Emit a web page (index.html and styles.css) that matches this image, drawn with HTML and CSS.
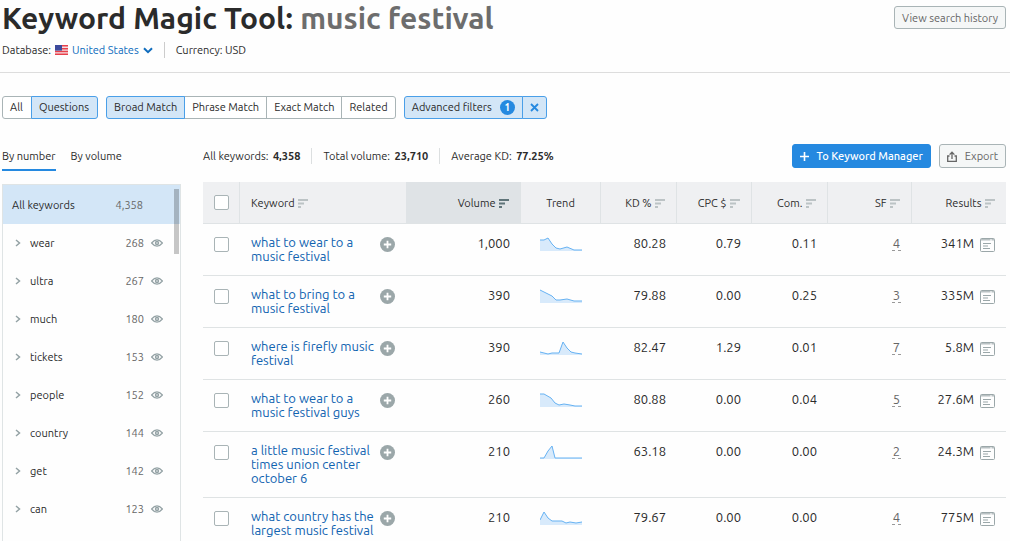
FILE: index.html
```
<!DOCTYPE html>
<html lang="en">
<head>
    <meta charset="UTF-8">
    <title>Keyword Magic Tool</title>
    <link rel="stylesheet" href="styles.css">
</head>
<body>
    <!-- Shared icons -->
    <svg class="icon-defs" aria-hidden="true">
        <symbol id="sort" viewBox="0 0 10 9">
            <path d="M0 0h10v2H0zM0 3.5h6v2H0zM0 7h3v2H0z" fill="currentColor"/>
        </symbol>
        <symbol id="plus" viewBox="0 0 15 15">
            <circle cx="7.5" cy="7.5" r="7.5" fill="currentColor"/>
            <path d="M7.5 3.8v7.4M3.8 7.5h7.4" stroke="#fff" stroke-width="1.8"/>
        </symbol>
        <symbol id="serp" viewBox="0 0 15 14">
            <rect x="0.5" y="0.5" width="14" height="13" rx="1" fill="none" stroke="currentColor"/>
            <path d="M1 1h9.5v1.5H1zM11.5 1H14v1.5h-2.5z" fill="currentColor" opacity="0.7"/>
            <path d="M3 5.5h8M3 8h5M3 10.5h7" stroke="currentColor"/>
        </symbol>
        <symbol id="chevron" viewBox="0 0 6 8">
            <path d="M1 1l3.5 3L1 7" fill="none" stroke="currentColor" stroke-width="1.5"/>
        </symbol>
        <symbol id="eye" viewBox="0 0 12 8">
            <path d="M0.6 4Q6 -2.4 11.4 4Q6 10.4 0.6 4z" fill="none" stroke="currentColor" stroke-width="1.2"/>
            <circle cx="6" cy="4" r="2.2" fill="currentColor"/>
            <circle cx="6" cy="4" r="0.7" fill="#fff"/>
        </symbol>
    </svg>

    <header class="page-header">
        <div>
            <h1 class="page-title">Keyword Magic Tool: <span>music festival</span></h1>
            <div class="page-info">
                <span>Database:</span>
                <svg class="flag" viewBox="0 0 13 10">
                    <path d="M0 0h13v10H0z" fill="#f4dfe2"/>
                    <path d="M0 0h13v1.6H0zM0 2.9h13v1.5H0zM0 5.7h13v1.5H0zM0 8.5h13V10H0z" fill="#e8404b"/>
                    <path d="M0 0h7v5.6H0z" fill="#3d4a9c"/>
                </svg>
                <button type="button" class="country-button">United States
                    <svg width="10" height="7" viewBox="0 0 10 7"><path d="M1 1.2l4 4 4-4" fill="none" stroke="currentColor" stroke-width="2"/></svg>
                </button>
                <span class="currency">Currency: USD</span>
            </div>
        </div>
        <button type="button" class="button">View search history</button>
    </header>

    <div class="filters">
        <div class="button-group scope">
            <button type="button">All</button>
            <button type="button" class="active">Questions</button>
        </div>
        <div class="button-group">
            <button type="button" class="active">Broad Match</button>
            <button type="button">Phrase Match</button>
            <button type="button">Exact Match</button>
            <button type="button">Related</button>
        </div>
        <div class="button-group">
            <button type="button" class="active">Advanced filters <span class="badge">1</span></button>
            <button type="button" class="active clear" aria-label="Clear filters">
                <svg width="9" height="9" viewBox="0 0 9 9"><path d="M1 1l7 7M8 1L1 8" stroke="currentColor" stroke-width="1.8"/></svg>
            </button>
        </div>
    </div>

    <div class="content">
        <aside class="sidebar">
            <div class="tabs">
                <button type="button" class="tab active">By number</button>
                <button type="button" class="tab">By volume</button>
            </div>
            <div class="groups">
                <div class="scroll-thumb"></div>
                <div class="group-all"><span>All keywords</span><span class="count">4,358</span></div>
                <ul>
                    <li><svg class="chevron"><use href="#chevron"/></svg><span class="name">wear</span><span class="count">268</span><svg class="eye"><use href="#eye"/></svg></li>
                    <li><svg class="chevron"><use href="#chevron"/></svg><span class="name">ultra</span><span class="count">267</span><svg class="eye"><use href="#eye"/></svg></li>
                    <li><svg class="chevron"><use href="#chevron"/></svg><span class="name">much</span><span class="count">180</span><svg class="eye"><use href="#eye"/></svg></li>
                    <li><svg class="chevron"><use href="#chevron"/></svg><span class="name">tickets</span><span class="count">153</span><svg class="eye"><use href="#eye"/></svg></li>
                    <li><svg class="chevron"><use href="#chevron"/></svg><span class="name">people</span><span class="count">152</span><svg class="eye"><use href="#eye"/></svg></li>
                    <li><svg class="chevron"><use href="#chevron"/></svg><span class="name">country</span><span class="count">144</span><svg class="eye"><use href="#eye"/></svg></li>
                    <li><svg class="chevron"><use href="#chevron"/></svg><span class="name">get</span><span class="count">142</span><svg class="eye"><use href="#eye"/></svg></li>
                    <li><svg class="chevron"><use href="#chevron"/></svg><span class="name">can</span><span class="count">123</span><svg class="eye"><use href="#eye"/></svg></li>
                </ul>
            </div>
        </aside>

        <main class="results">
            <div class="toolbar">
                <div class="summary">
                    <span>All keywords: <b>4,358</b></span>
                    <span>Total volume: <b>23,710</b></span>
                    <span>Average KD: <b>77.25%</b></span>
                </div>
                <button type="button" class="button primary">
                    <svg width="9" height="9" viewBox="0 0 9 9"><path d="M4.5 0v9M0 4.5h9" stroke="currentColor" stroke-width="1.6"/></svg>
                    To Keyword Manager
                </button>
                <button type="button" class="button">
                    <svg width="10" height="11" viewBox="0 0 10 11"><path d="M2.5 5H0.7v5.3h8.6V5H7.5M5 8V1.5M2.6 3.6L5 1.2l2.4 2.4" fill="none" stroke="currentColor" stroke-width="1.3"/></svg>
                    Export
                </button>
            </div>

            <table class="keywords">
                <colgroup>
                    <col class="col-check"><col><col class="col-volume"><col class="col-trend"><col class="col-num"><col class="col-cpc"><col class="col-num"><col class="col-sf"><col class="col-results">
                </colgroup>
                <thead>
                    <tr>
                        <th class="check"><input type="checkbox" aria-label="Select all"></th>
                        <th class="keyword">Keyword <svg class="sort"><use href="#sort"/></svg></th>
                        <th class="sorted">Volume <svg class="sort"><use href="#sort"/></svg></th>
                        <th class="trend">Trend</th>
                        <th>KD % <svg class="sort"><use href="#sort"/></svg></th>
                        <th>CPC $ <svg class="sort"><use href="#sort"/></svg></th>
                        <th>Com. <svg class="sort"><use href="#sort"/></svg></th>
                        <th>SF <svg class="sort"><use href="#sort"/></svg></th>
                        <th>Results <svg class="sort"><use href="#sort"/></svg></th>
                    </tr>
                </thead>
                <tbody>
                    <tr>
                        <td class="check"><input type="checkbox" aria-label="Select keyword"></td>
                        <td><div class="phrase"><a href="#">what to wear to a music festival</a><svg class="add"><use href="#plus"/></svg></div></td>
                        <td>1,000</td>
                        <td class="trend"><svg viewBox="0 0 42 14"><path class="area" d="M0 3L4 3L8 1L12 7L16 11L20 12L27 10L34 13L42 13V14H0z"/><path class="line" d="M0 3L4 3L8 1L12 7L16 11L20 12L27 10L34 13L42 13"/></svg></td>
                        <td>80.28</td>
                        <td>0.79</td>
                        <td>0.11</td>
                        <td><span class="sf">4</span></td>
                        <td>341M <svg class="serp"><use href="#serp"/></svg></td>
                    </tr>
                    <tr>
                        <td class="check"><input type="checkbox" aria-label="Select keyword"></td>
                        <td><div class="phrase"><a href="#">what to bring to a music festival</a><svg class="add"><use href="#plus"/></svg></div></td>
                        <td>390</td>
                        <td class="trend"><svg viewBox="0 0 42 14"><path class="area" d="M0 1L6 4L12 7L16 11L20 11L27 10L34 12L42 12V14H0z"/><path class="line" d="M0 1L6 4L12 7L16 11L20 11L27 10L34 12L42 12"/></svg></td>
                        <td>79.88</td>
                        <td>0.00</td>
                        <td>0.25</td>
                        <td><span class="sf">3</span></td>
                        <td>335M <svg class="serp"><use href="#serp"/></svg></td>
                    </tr>
                    <tr>
                        <td class="check"><input type="checkbox" aria-label="Select keyword"></td>
                        <td><div class="phrase"><a href="#">where is firefly music festival</a><svg class="add"><use href="#plus"/></svg></div></td>
                        <td>390</td>
                        <td class="trend"><svg viewBox="0 0 42 14"><path class="area" d="M0 11L4 12L8 13L12 12L19 12L23 1L27 7L31 11L35 12L42 13V14H0z"/><path class="line" d="M0 11L4 12L8 13L12 12L19 12L23 1L27 7L31 11L35 12L42 13"/></svg></td>
                        <td>82.47</td>
                        <td>1.29</td>
                        <td>0.01</td>
                        <td><span class="sf">7</span></td>
                        <td>5.8M <svg class="serp"><use href="#serp"/></svg></td>
                    </tr>
                    <tr>
                        <td class="check"><input type="checkbox" aria-label="Select keyword"></td>
                        <td><div class="phrase"><a href="#">what to wear to a music festival guys</a><svg class="add"><use href="#plus"/></svg></div></td>
                        <td>260</td>
                        <td class="trend"><svg viewBox="0 0 42 14"><path class="area" d="M0 1L4 1L11 5L15 10L19 12L24 11L30 12L35 13L42 13V14H0z"/><path class="line" d="M0 1L4 1L11 5L15 10L19 12L24 11L30 12L35 13L42 13"/></svg></td>
                        <td>80.88</td>
                        <td>0.00</td>
                        <td>0.04</td>
                        <td><span class="sf">5</span></td>
                        <td>27.6M <svg class="serp"><use href="#serp"/></svg></td>
                    </tr>
                    <tr>
                        <td class="check"><input type="checkbox" aria-label="Select keyword"></td>
                        <td><div class="phrase"><a href="#">a little music festival times union center october 6</a><svg class="add"><use href="#plus"/></svg></div></td>
                        <td>210</td>
                        <td class="trend"><svg viewBox="0 0 42 14"><path class="area" d="M0 13L4 13L8 6L12 1L15 13L42 13V14H0z"/><path class="line" d="M0 13L4 13L8 6L12 1L15 13L42 13"/></svg></td>
                        <td>63.18</td>
                        <td>0.00</td>
                        <td>0.00</td>
                        <td><span class="sf">2</span></td>
                        <td>24.3M <svg class="serp"><use href="#serp"/></svg></td>
                    </tr>
                    <tr>
                        <td class="check"><input type="checkbox" aria-label="Select keyword"></td>
                        <td><div class="phrase"><a href="#">what country has the largest music festival</a><svg class="add"><use href="#plus"/></svg></div></td>
                        <td>210</td>
                        <td class="trend"><svg viewBox="0 0 42 14"><path class="area" d="M0 9L4 1L8 7L12 10L22 10L26 12L30 11L36 12L42 11V14H0z"/><path class="line" d="M0 9L4 1L8 7L12 10L22 10L26 12L30 11L36 12L42 11"/></svg></td>
                        <td>79.67</td>
                        <td>0.00</td>
                        <td>0.00</td>
                        <td><span class="sf">4</span></td>
                        <td>775M <svg class="serp"><use href="#serp"/></svg></td>
                    </tr>
                </tbody>
            </table>
        </main>
    </div>
</body>
</html>
```
FILE: styles.css
```
* {
    box-sizing: border-box;
}

body {
    font-family: Ubuntu, "Noto Sans", sans-serif;
    font-size: 11px;
    line-height: 16px;
    margin: 0;
    height: 100vh;
    display: flex;
    flex-direction: column;
    overflow: hidden;
    color: #2b2b2b;
    background-color: #fefefe;
}

button {
    font: inherit;
    color: inherit;
    cursor: pointer;
}

svg {
    flex: none;
}

.icon-defs {
    display: none;
}

/* Header */
.page-header {
    display: flex;
    justify-content: space-between;
    align-items: flex-start;
    height: 73px;
    padding: 0 4px 0 2px;
    border-bottom: 1px solid #ddd;
    flex: none;
}

.page-header .button {
    margin-top: 6px;
    height: 23px;
}

.page-title {
    margin: 0;
    font-family: Ubuntu, "Open Sans", sans-serif;
    font-size: 30px;
    line-height: 36px;
    font-weight: 600;
    color: #2b2b2b;
}

.page-title span {
    color: #6d6d6d;
}

.page-info {
    display: flex;
    align-items: center;
    margin-top: 6px;
}

.flag {
    width: 13px;
    height: 10px;
    margin: 0 4px;
}

.country-button {
    display: flex;
    align-items: center;
    gap: 4px;
    padding: 0;
    border: none;
    background: none;
    color: #0f6cbd;
}

.currency {
    margin-left: 11px;
    padding-left: 11px;
    border-left: 1px solid #ccc;
}

.button {
    display: flex;
    align-items: center;
    gap: 8px;
    height: 24px;
    padding: 0 7px;
    border: 1px solid #a9b4b6;
    border-radius: 3px;
    background-color: #f5f7f7;
    color: #666;
    white-space: nowrap;
}

.button.primary {
    border-color: #2589e0;
    background-color: #2589e0;
    color: white;
    font-family: Ubuntu, "Open Sans", sans-serif;
    font-weight: 500;
}

/* Filters */
.filters {
    display: flex;
    gap: 8px;
    padding: 23px 3px 0 2px;
    flex: none;
}

.button-group {
    display: flex;
}

.button-group button {
    display: flex;
    align-items: center;
    gap: 8px;
    height: 23px;
    padding: 0 7px 1px;
    margin-left: -1px;
    border: 1px solid #a9b4b6;
    background-color: white;
    white-space: nowrap;
}

.button-group.scope button {
    padding: 0 8px 1px 7px;
}

.button-group button:first-child {
    margin-left: 0;
    border-radius: 3px 0 0 3px;
}

.button-group button:last-child {
    border-radius: 0 3px 3px 0;
}

.button-group button.active {
    position: relative;
    border-color: #4a9fe8;
    background-color: #d3e6f7;
}

.button-group button.clear {
    color: #2589e0;
}

.badge {
    width: 15px;
    height: 15px;
    border-radius: 50%;
    background-color: #2589e0;
    color: white;
    font-size: 10px;
    line-height: 15px;
    text-align: center;
    font-weight: 700;
}

/* Content */
.content {
    display: flex;
    gap: 22px;
    flex: 1;
    min-height: 0;
    padding: 24px 4px 0 2px;
}

.sidebar {
    display: flex;
    flex-direction: column;
    width: 179px;
    flex: none;
}

.tabs {
    display: flex;
    gap: 15px;
    height: 41px;
    align-items: flex-start;
}

.tab {
    height: 28px;
    padding: 0;
    border: none;
    border-bottom: 2px solid transparent;
    background: none;
}

.tab.active {
    border-bottom-color: #2589e0;
}

.groups {
    position: relative;
    flex: 1;
    min-height: 0;
    overflow: hidden;
    border: 1px solid #dfe4e5;
    border-bottom: none;
}

.scroll-thumb {
    position: absolute;
    top: 4px;
    right: 1px;
    width: 5px;
    height: 65px;
    background-color: rgba(0, 0, 0, 0.22);
}

.group-all {
    display: flex;
    justify-content: space-between;
    align-items: center;
    height: 39px;
    padding: 0 37px 0 9px;
    background-color: #d3e6f7;
}

.groups ul {
    list-style: none;
    margin: 0;
    padding: 0;
}

.groups li {
    display: flex;
    align-items: center;
    height: 38px;
    padding: 0 17px 0 12px;
}

.chevron {
    width: 6px;
    height: 8px;
    color: #94a2a5;
}

.name {
    flex: 1;
    margin-left: 9px;
}

.count {
    color: #666;
}

.eye {
    width: 12px;
    height: 8px;
    margin-left: 7px;
    color: #94a2a5;
}

.results {
    flex: 1;
    min-width: 0;
}

.toolbar {
    display: flex;
    align-items: center;
    gap: 8px;
    height: 39px;
    padding-bottom: 13px;
}

.summary {
    display: flex;
    flex: 1;
}

.summary span + span {
    margin-left: 11px;
    padding-left: 11px;
    border-left: 1px solid #dcdfe0;
}

.summary b {
    margin-left: 2px;
}

/* Keyword table */
.keywords {
    width: 100%;
    table-layout: fixed;
    border-collapse: separate;
    border-spacing: 0;
}

.col-check { width: 37px; }
.col-volume { width: 115px; }
.col-trend { width: 80px; }
.col-num { width: 76px; }
.col-cpc { width: 75px; }
.col-sf { width: 84px; }
.col-results { width: 94px; }

.keywords th {
    height: 42px;
    padding: 0 11px;
    border-right: 1px solid #dfe3e5;
    border-bottom: 1px solid #dfe3e5;
    background-color: #eff0f2;
    font-weight: 400;
    text-align: right;
    white-space: nowrap;
}

.keywords th:last-child,
.keywords th.keyword {
    border-right: none;
}

.keywords th.keyword {
    text-align: left;
}

.keywords th.sorted {
    background-color: #dfe3e6;
}

.sort {
    width: 10px;
    height: 9px;
    margin-left: 1px;
    vertical-align: -1px;
    color: #bcc3c5;
}

.sorted .sort {
    color: #5f7479;
}

.keywords td {
    padding: 11px 11px 12px;
    border-bottom: 1px solid #dfe3e4;
    font-size: 13px;
    line-height: 16px;
    text-align: right;
    vertical-align: top;
    white-space: nowrap;
}

.keywords .check,
.keywords .trend {
    text-align: center;
}

.check input {
    appearance: none;
    display: block;
    width: 15px;
    height: 15px;
    margin: 0 auto;
    border: 1px solid #a9b4b6;
    border-radius: 2px;
    background-color: white;
}

td.check input {
    margin-top: 2px;
}

.phrase {
    display: flex;
    gap: 4px;
    text-align: left;
    white-space: normal;
}

.phrase a {
    flex: 1;
    line-height: 14px;
    color: #0f62b0;
    text-decoration: none;
}

.add {
    width: 15px;
    height: 15px;
    margin-top: 2px;
    color: #9ba7a9;
}

.trend svg {
    width: 42px;
    height: 14px;
    margin-top: 2px;
}

.area {
    fill: #d8eafb;
}

.line {
    fill: none;
    stroke: #66b2f3;
}

.sf {
    display: inline-block;
    padding: 0 1px;
    border-bottom: 1px dashed #999;
    line-height: 14px;
    color: #666;
}

.serp {
    width: 15px;
    height: 14px;
    margin-left: 3px;
    vertical-align: -4px;
    color: #9ba7a9;
}
```
